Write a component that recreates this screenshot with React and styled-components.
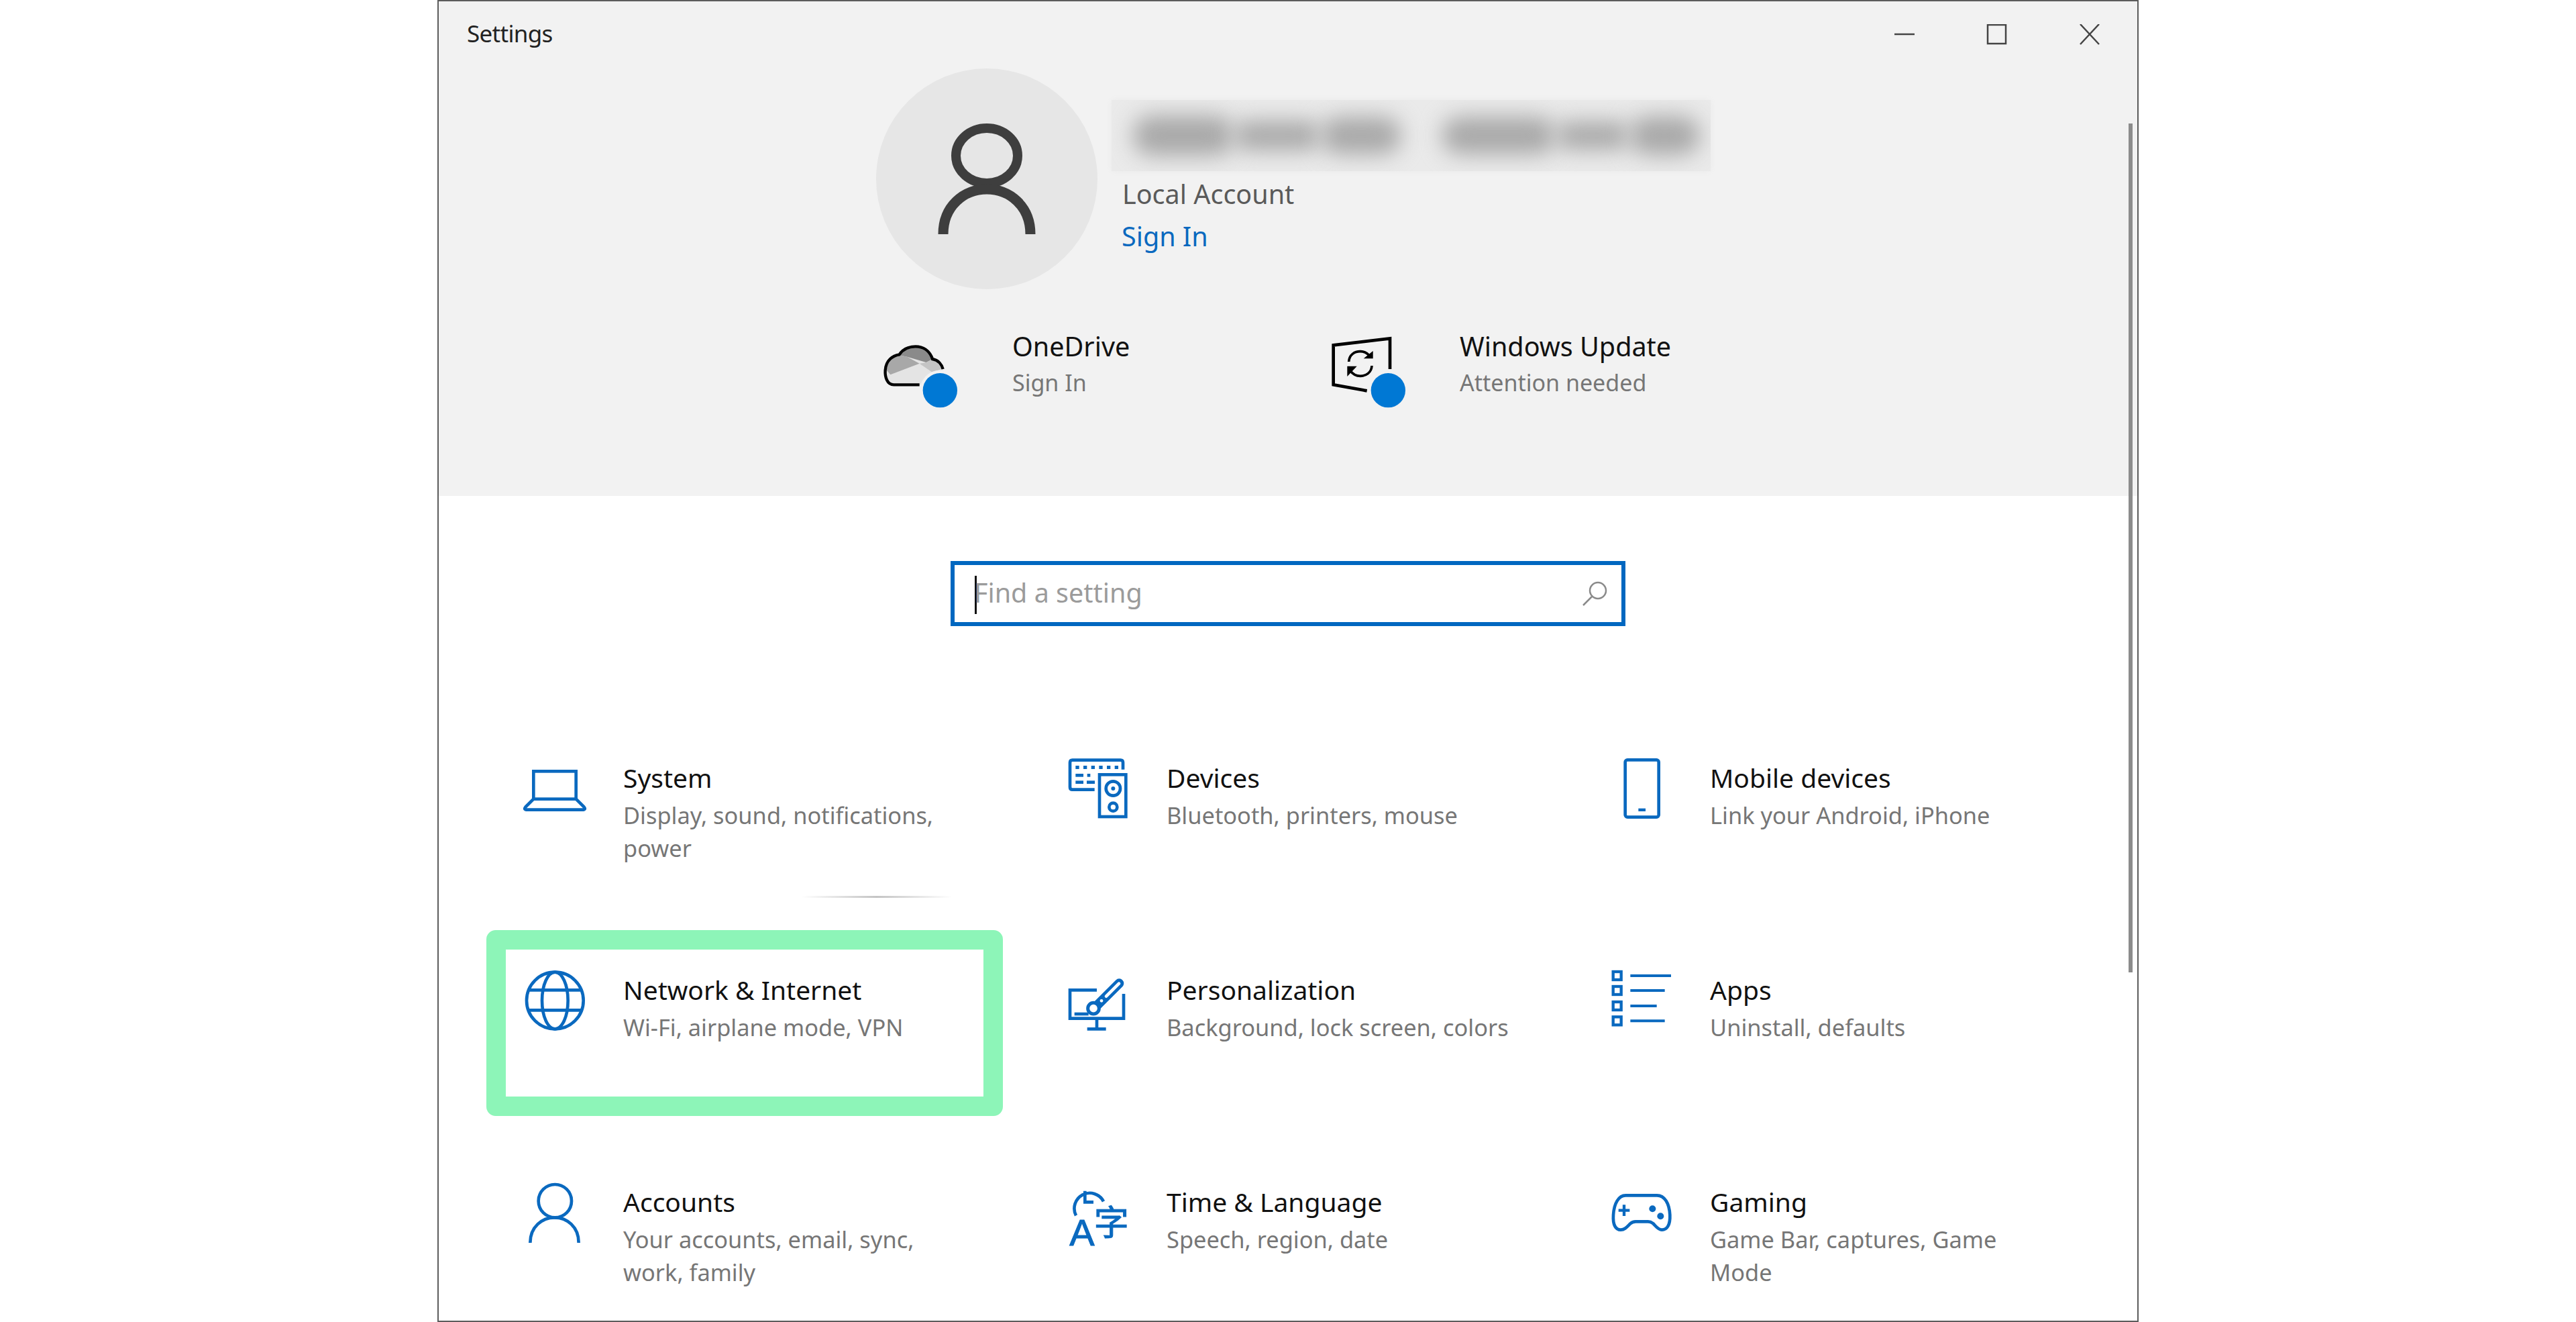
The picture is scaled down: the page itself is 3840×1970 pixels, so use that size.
import React from 'react';
import styled, { createGlobalStyle } from 'styled-components';

const BLUE = '#0a69bf';

const Global = createGlobalStyle`
  html, body { margin: 0; padding: 0; background: #fff; }
  * { box-sizing: border-box; }
  body { font-family: "Noto Sans", "Open Sans", sans-serif; }
`;
const Page = styled.div`
  width: 3840px;
  height: 1970px;
  display: flex;
  justify-content: center;
  overflow: hidden;
`;
const Window = styled.div`
  position: relative;
  width: 2536px;
  height: 1970px;
  border: 2px solid #5c5c5c;
  background: #fff;
  overflow: hidden;
`;
const Scrollbar = styled.div`
  position: absolute;
  top: 182px;
  right: 7px;
  width: 6px;
  height: 1265px;
  background: #8c8c8c;
`;
const Header = styled.header`
  height: 737px;
  background: #f2f2f2;
`;
const TitleBar = styled.div`
  height: 100px;
  padding-left: 42px;
  display: flex;
  align-items: center;
  justify-content: space-between;
`;
const AppName = styled.div`
  font-size: 35px;
  line-height: 44px;
  margin-top: -4px;
  color: #222;
  letter-spacing: -0.7px;
`;
const Controls = styled.div`
  display: flex;
  padding-right: 2px;
`;
const ControlButton = styled.div`
  width: 138px;
  height: 100px;
  display: flex;
  align-items: center;
  justify-content: center;
`;
const Account = styled.div`
  display: flex;
  padding-left: 652px;
`;
const Avatar = styled.div`
  width: 330px;
  height: 329px;
  border-radius: 50%;
  background: #e6e6e6;
  flex: none;
`;
const AccountInfo = styled.div`
  margin-left: 21px;
  padding-top: 47px;
`;
const NameBlur = styled.div`
  width: 893px;
  height: 106px;
  padding: 0 32px;
  display: flex;
  align-items: center;
  background: #eaeaea;
  box-shadow: 0 0 8px #eaeaea;
  overflow: hidden;
`;
const Blob = styled.div`
  width: ${p => p.$w}px;
  height: ${p => p.$h}px;
  margin-right: ${p => p.$gap || 0}px;
  flex: none;
  border-radius: 28px;
  background: #a9a9a9;
  filter: blur(16px);
`;
const AccountType = styled.div`
  margin: 9px 0 0 16px;
  font-size: 39.5px;
  line-height: 50px;
  color: #5a5a5a;
`;
const SignInLink = styled.a`
  display: block;
  margin: 13px 0 0 15px;
  font-size: 39.5px;
  line-height: 50px;
  color: ${BLUE};
`;
const QuickRow = styled.div`
  display: flex;
  margin-top: 64px;
  padding-left: 655px;
`;
const QuickLink = styled.div`
  width: 667px;
  display: flex;
  gap: 75px;
`;
const QuickText = styled.div`
  margin-top: -2px;
`;
const QuickTitle = styled.div`
  font-size: 39.5px;
  line-height: 46px;
  color: #111;
`;
const QuickSub = styled.div`
  margin-top: 6px;
  font-size: 34px;
  line-height: 50px;
  color: #767676;
`;
const SearchBox = styled.div`
  width: 1006px;
  height: 97px;
  margin: 97px auto 0;
  border: 6px solid #0067c0;
  display: flex;
  align-items: center;
  padding: 0 21px 0 30px;
  justify-content: space-between;
`;
const Caret = styled.div`
  height: 57px;
  border-left: 3px solid #111;
  margin-top: 3px;
`;
const Placeholder = styled.div`
  margin-left: -4px;
  font-size: 39.5px;
  line-height: 50px;
  color: #9b9b9b;
`;
const Grid = styled.div`
  display: grid;
  grid-template-columns: repeat(3, 810px);
  grid-auto-rows: 316px;
  margin-top: 187px;
  padding-left: 116px;
`;
const Card = styled.div`
  position: relative;
  display: flex;
  gap: 44px;
`;
const CardIcon = styled.svg`
  width: 115px;
  height: 110px;
  flex: none;
  overflow: visible;
`;
const CardText = styled.div`
  padding-top: 12px;
`;
const CardTitle = styled.div`
  font-size: 39px;
  line-height: 54px;
  color: #111;
`;
const CardDesc = styled.div`
  margin-top: 4px;
  font-size: 34.4px;
  line-height: 49px;
  color: #767676;
  white-space: pre-line;
`;
const Highlight = styled.div`
  position: absolute;
  left: -45px;
  top: -50px;
  width: 770px;
  height: 277px;
  border: 29px solid #8df5b8;
  border-radius: 14px;
  pointer-events: none;
`;
const Smudge = styled.div`
  position: absolute;
  left: 425px;
  top: 215px;
  width: 224px;
  height: 3px;
  background: linear-gradient(90deg, transparent, #c4c4c4 50%, transparent);
`;

const Blue = styled.g`
  fill: none;
  stroke: ${BLUE};
  stroke-width: 14;
`;
const Ink = styled.g`
  fill: ${BLUE};
`;
const IconGlyph = styled.text`
  fill: ${BLUE};
  stroke: ${BLUE};
  stroke-width: 3;
  font-family: ${p => p.$cjk ? '"Noto Sans CJK SC", sans-serif' : '"Liberation Sans", sans-serif'};
  font-size: ${p => p.$size}px;
`;

const SystemIcon = () => (
  <Blue>
    <rect x="76" y="88" width="190" height="124" />
    <path d="M76 212 L40 248 Q30 260 50 260 H292 Q312 260 302 248 L266 212" />
  </Blue>
);
const DevicesIcon = () => (
  <>
    <Blue>
      <path d="M155 170 H56 Q45 170 45 159 V49 Q45 38 56 38 H271 Q282 38 282 49 V80" />
      <rect x="177" y="103" width="118" height="188" />
      <circle cx="238" cy="165" r="32" />
      <circle cx="238" cy="248" r="18" />
    </Blue>
    <Ink>
      {[70, 105, 140, 175, 210, 245].map(x => <rect key={x} x={x} y="63" width="16" height="15" />)}
      <rect x="70" y="99" width="35" height="14" />
      <rect x="122" y="99" width="14" height="14" />
      <rect x="70" y="130" width="35" height="14" />
      <rect x="120" y="130" width="36" height="14" />
      <circle cx="238" cy="165" r="9" />
    </Ink>
  </>
);
const MobileIcon = () => (
  <>
    <Blue>
      <rect x="98" y="37" width="150" height="256" rx="10" />
    </Blue>
    <Ink>
      <rect x="157" y="254" width="32" height="13" />
    </Ink>
  </>
);
const GlobeIcon = () => (
  <Blue>
    <circle cx="172" cy="165" r="127" />
    <ellipse cx="172" cy="165" rx="58" ry="127" />
    <path d="M52 118 H292 M52 208 H292" />
  </Blue>
);
const PersonalizationIcon = () => (
  <>
    <Blue>
      <path d="M165 118 H45 V245 H285 V135" />
      <path d="M165 245 V292 M122 292 H206" />
      <path d="M65 225 H128" />
    </Blue>
    <line x1="265" y1="88" x2="168" y2="185" stroke={BLUE} strokeWidth="42" strokeLinecap="round" />
    <line x1="264" y1="89" x2="207" y2="146" stroke="#fff" strokeWidth="14" strokeLinecap="round" />
    <circle cx="186" cy="166" r="7" fill="#fff" />
    <circle cx="150" cy="200" r="25" fill="#fff" stroke={BLUE} strokeWidth="15" />
  </>
);
const AppsIcon = () => (
  <Blue>
    {[54, 120, 189, 256].map(y => <rect key={y} x="44" y={y - 18} width="36" height="36" strokeWidth="13" />)}
    <path d="M121 54 H303 M121 120 H275 M121 189 H239 M121 256 H275" strokeWidth="12" />
  </Blue>
);
const AccountsIcon = () => (
  <Blue>
    <circle cx="172" cy="113" r="74" />
    <path d="M61 300 C61 228 115 187 170 187 C225 187 278 228 278 300" />
  </Blue>
);
const TimeIcon = () => (
  <>
    <Blue>
      <path d="M72 178 A68 68 0 1 1 195 115" />
      <path d="M112 68 V118 H150" />
    </Blue>
    <IconGlyph x="43" y="311" $size="168">A</IconGlyph>
    <IconGlyph x="152" y="268" $size="156" $cjk>字</IconGlyph>
  </>
);
const GamingIcon = () => (
  <>
    <Blue>
      <path d="M100 88 H240 C275 88 295 125 298 175 C300 220 285 242 262 242 C245 242 235 225 222 213 Q212 205 200 205 H145 Q130 205 120 215 C105 230 95 242 78 242 C55 242 42 220 45 175 C48 125 68 88 100 88 Z" />
      <path d="M68 155 H118 M93 130 V180" strokeWidth="13" />
    </Blue>
    <Ink>
      <circle cx="220" cy="148" r="15" />
      <circle cx="256" cy="181" r="15" />
    </Ink>
  </>
);

const CARDS = [
  { title: 'System', desc: 'Display, sound, notifications,\npower', Icon: SystemIcon, smudge: true },
  { title: 'Devices', desc: 'Bluetooth, printers, mouse', Icon: DevicesIcon },
  { title: 'Mobile devices', desc: 'Link your Android, iPhone', Icon: MobileIcon },
  { title: 'Network & Internet', desc: 'Wi-Fi, airplane mode, VPN', Icon: GlobeIcon, selected: true },
  { title: 'Personalization', desc: 'Background, lock screen, colors', Icon: PersonalizationIcon },
  { title: 'Apps', desc: 'Uninstall, defaults', Icon: AppsIcon },
  { title: 'Accounts', desc: 'Your accounts, email, sync,\nwork, family', Icon: AccountsIcon },
  { title: 'Time & Language', desc: 'Speech, region, date', Icon: TimeIcon },
  { title: 'Gaming', desc: 'Game Bar, captures, Game\nMode', Icon: GamingIcon },
];

const OneDriveIcon = () => (
  <svg width="125" height="120" viewBox="0 0 375 360">
    <path d="M185 235 H70 C40 235 30 200 32 170 C35 125 65 105 95 100 C115 70 150 62 180 65 C215 70 235 95 243 120 C270 125 285 145 290 165 L290 235 Z" fill="#e4e4e4" />
    <path d="M95 103 C115 72 150 65 180 68 C215 72 233 95 240 122 L215 135 L130 110 Z" fill="#8a8a8a" />
    <path d="M38 170 C40 130 65 108 95 103 L130 110 L185 140 L55 190 Z" fill="#a8a8a8" />
    <path d="M185 140 L215 135 L240 122 C265 127 280 145 285 165 L240 178 Z" fill="#c4c4c4" />
    <path d="M185 235 H70 C40 235 30 200 32 170 C35 125 65 105 95 100 C115 70 150 62 180 65 C215 70 235 95 243 120 C270 125 285 145 290 165" fill="none" stroke="#000" strokeWidth="13" />
    <circle cx="277" cy="260" r="90" fill="#f2f2f2" />
    <circle cx="277" cy="260" r="77" fill="#0078d4" />
  </svg>
);
const UpdateIcon = () => (
  <svg width="125" height="120" viewBox="0 0 375 360">
    <path d="M288 165 V28 L35 58 V235 L185 262" fill="none" stroke="#000" strokeWidth="14" />
    <g fill="none" stroke="#000" strokeWidth="11">
      <path d="M104 132 C106 100 130 86 155 86 C172 86 188 94 200 110" />
      <path d="M207 150 C205 182 180 196 155 196 C138 196 122 188 110 172" />
    </g>
    <path d="M170 118 L212 118 L212 84 Z" fill="#000" />
    <path d="M97 198 L97 152 L140 152 Z" fill="#000" />
    <circle cx="280" cy="260" r="90" fill="#f2f2f2" />
    <circle cx="280" cy="260" r="77" fill="#0078d4" />
  </svg>
);

const App = () => {
  return (
    <Page>
      <Global />
      <Window>
        <Header>
          <TitleBar>
            <AppName>Settings</AppName>
            <Controls>
              <ControlButton>
                <svg width="32" height="32" viewBox="0 0 32 32"><path d="M1 15 H31" stroke="#444" strokeWidth="2.5" /></svg>
              </ControlButton>
              <ControlButton>
                <svg width="32" height="32" viewBox="0 0 32 32"><rect x="2" y="1" width="27" height="28" fill="none" stroke="#444" strokeWidth="2.5" /></svg>
              </ControlButton>
              <ControlButton>
                <svg width="32" height="32" viewBox="0 0 32 32"><path d="M2 0 L30 30 M30 0 L2 30" stroke="#444" strokeWidth="2.5" /></svg>
              </ControlButton>
            </Controls>
          </TitleBar>
          <Account>
            <Avatar>
              <svg width="330" height="329" viewBox="0 0 330 329">
                <ellipse cx="165" cy="130" rx="46" ry="41" fill="none" stroke="#3e3e3e" strokeWidth="14" />
                <path d="M100 247 C100 205 131 180 165 180 C199 180 230 205 230 247" fill="none" stroke="#3e3e3e" strokeWidth="15" />
              </svg>
            </Avatar>
            <AccountInfo>
              <NameBlur>
                <Blob $w={150} $h={60} />
                <Blob $w={130} $h={44} />
                <Blob $w={120} $h={56} $gap={60} />
                <Blob $w={170} $h={56} />
                <Blob $w={110} $h={42} />
                <Blob $w={105} $h={58} />
              </NameBlur>
              <AccountType>Local Account</AccountType>
              <SignInLink>Sign In</SignInLink>
            </AccountInfo>
          </Account>
          <QuickRow>
            <QuickLink>
              <OneDriveIcon />
              <QuickText>
                <QuickTitle>OneDrive</QuickTitle>
                <QuickSub>Sign In</QuickSub>
              </QuickText>
            </QuickLink>
            <QuickLink>
              <UpdateIcon />
              <QuickText>
                <QuickTitle>Windows Update</QuickTitle>
                <QuickSub>Attention needed</QuickSub>
              </QuickText>
            </QuickLink>
          </QuickRow>
        </Header>
        <SearchBox>
          <Caret>
            <Placeholder>Find a setting</Placeholder>
          </Caret>
          <svg width="38" height="38" viewBox="0 0 38 38">
            <circle cx="24" cy="14" r="12" fill="none" stroke="#8a8a8a" strokeWidth="2.5" />
            <path d="M15 23 L2 36" stroke="#8a8a8a" strokeWidth="2.5" />
          </svg>
        </SearchBox>
        <Grid>
          {CARDS.map(card => (
            <Card key={card.title}>
              <CardIcon viewBox="0 0 345 330"><card.Icon /></CardIcon>
              <CardText>
                <CardTitle>{card.title}</CardTitle>
                <CardDesc>{card.desc}</CardDesc>
              </CardText>
              {card.selected && <Highlight />}
              {card.smudge && <Smudge />}
            </Card>
          ))}
        </Grid>
        <Scrollbar />
      </Window>
    </Page>
  );
};

export default App;
